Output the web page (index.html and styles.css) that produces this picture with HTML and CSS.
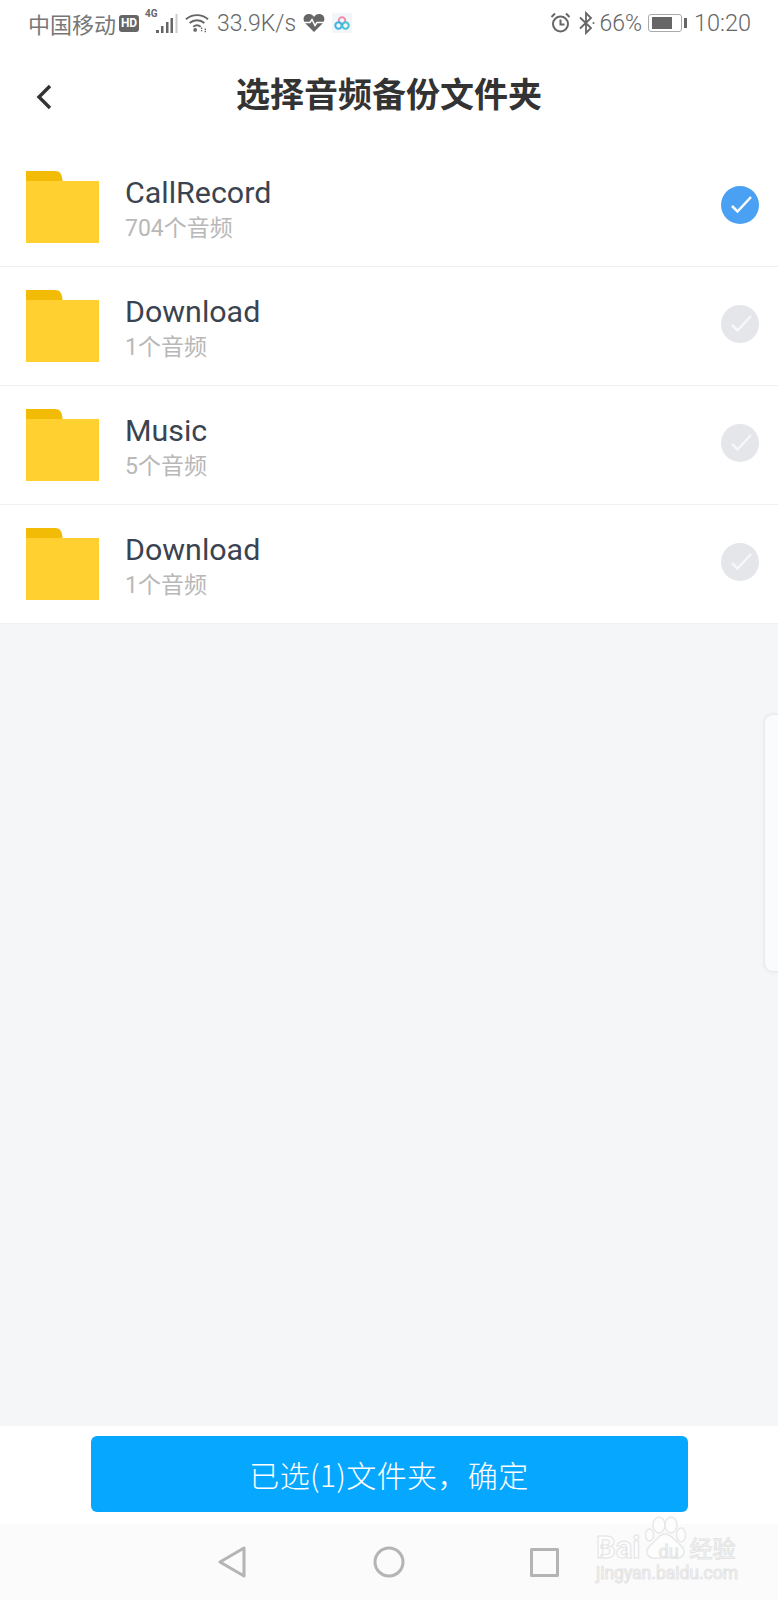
FILE: index.html
```html
<!DOCTYPE html>
<html>
    <head>
        <title>选择音频备份文件夹</title>
        <link rel="stylesheet" href="styles.css">
    </head>
    <body>
        <div class="page">
            <div class="status">
                <div class="status-left">
                    <span class="carrier">中国移动</span>
                    <span class="hd">HD</span>
                    <span class="net"><span class="net-label">4G</span><svg width="24" height="22" viewBox="0 0 24 22"><g fill="#666"><rect x="1" y="17" width="3" height="3"/><rect x="6" y="13" width="2.500" height="7"/><rect x="11" y="9" width="2.500" height="11"/><rect x="15.500" y="5" width="2.500" height="15"/></g><rect x="20.500" y="1" width="2" height="19" fill="#ccc"/></svg></span>
                    <svg width="24" height="22" viewBox="0 0 26 22" fill="none" stroke="#666" stroke-width="2"><path d="M1 7c7-6 17-6 24 0M5 11c4.500-4 11.500-4 16 0M9 15c2.500-2 5.500-2 8 0"/><circle cx="11" cy="18.500" r="2" fill="#666" stroke="none"/><path d="M18 16v5M22 17v4" stroke-width="1.500" stroke-dasharray="1.500 1"/></svg>
                    <span class="speed">33.9K/s</span>
                    <svg width="22" height="20" viewBox="0 0 22 20"><path d="M11 19 2 10C-1 6 1 1 6 1c2 0 4 1 5 3 1-2 3-3 5-3 5 0 7 5 4 9z" fill="#666"/><path d="M1 9.500h6l2-3 3 6 2-3h7" stroke="#fff" stroke-width="1.500" fill="none"/></svg>
                    <svg width="20" height="20" viewBox="0 0 20 20" fill="none" stroke-width="2"><rect width="20" height="20" rx="2" fill="#f2f6f8" stroke="none"/><circle cx="10" cy="7.500" r="3.200" stroke="#ee8fb0"/><circle cx="6.500" cy="12.500" r="3.200" stroke="#3fb4e6"/><circle cx="13.500" cy="12.500" r="3.200" stroke="#45c4d8"/></svg>
                </div>
                <div class="status-right">
                    <svg width="21" height="22" viewBox="0 0 21 22" fill="none" stroke="#666" stroke-width="2"><circle cx="10.500" cy="12" r="7.500"/><path d="M10.500 7.500V12.500H14.500M1.500 5 5 1.500M19.500 5 16 1.500"/></svg>
                    <svg class="ic-bt" width="17" height="24" viewBox="0 0 17 24" fill="none" stroke="#666" stroke-width="1.800"><path d="M2 6.500 13 17l-5 5V2l5 5L2 17.500"/><circle cx="15.500" cy="12" r="1" fill="#666" stroke="none"/></svg>
                    <span class="pct">66%</span>
                    <span class="battery"><span class="battery-fill"></span></span>
                    <span class="battery-tip"></span>
                    <span class="clock">10:20</span>
                </div>
            </div>

            <div class="header">
                <svg class="back" width="16" height="26" viewBox="0 0 16 26" fill="none" stroke="#333" stroke-width="3.400"><path d="M14 2 3 13l11 11"/></svg>
                <h1>选择音频备份文件夹</h1>
            </div>

            <div class="list">
                <div class="row">
                    <svg class="folder" width="73" height="72" viewBox="0 0 73 72"><path d="M0 10V0h29c5 0 7 3 7.500 10z" fill="#f2bb06"/><rect y="10" width="73" height="62" fill="#ffd02f"/></svg>
                    <div class="info">
                        <div class="name">CallRecord</div>
                        <div class="count">704个音频</div>
                    </div>
                    <svg class="check on" width="38" height="38" viewBox="0 0 38 38"><circle cx="19" cy="19" r="19"/><path d="M11 20l5.500 5.500L30 11"/></svg>
                </div>
                <div class="row">
                    <svg class="folder" width="73" height="72" viewBox="0 0 73 72"><path d="M0 10V0h29c5 0 7 3 7.500 10z" fill="#f2bb06"/><rect y="10" width="73" height="62" fill="#ffd02f"/></svg>
                    <div class="info">
                        <div class="name">Download</div>
                        <div class="count">1个音频</div>
                    </div>
                    <svg class="check" width="38" height="38" viewBox="0 0 38 38"><circle cx="19" cy="19" r="19"/><path d="M11 20l5.500 5.500L30 11"/></svg>
                </div>
                <div class="row">
                    <svg class="folder" width="73" height="72" viewBox="0 0 73 72"><path d="M0 10V0h29c5 0 7 3 7.500 10z" fill="#f2bb06"/><rect y="10" width="73" height="62" fill="#ffd02f"/></svg>
                    <div class="info">
                        <div class="name">Music</div>
                        <div class="count">5个音频</div>
                    </div>
                    <svg class="check" width="38" height="38" viewBox="0 0 38 38"><circle cx="19" cy="19" r="19"/><path d="M11 20l5.500 5.500L30 11"/></svg>
                </div>
                <div class="row">
                    <svg class="folder" width="73" height="72" viewBox="0 0 73 72"><path d="M0 10V0h29c5 0 7 3 7.500 10z" fill="#f2bb06"/><rect y="10" width="73" height="62" fill="#ffd02f"/></svg>
                    <div class="info">
                        <div class="name">Download</div>
                        <div class="count">1个音频</div>
                    </div>
                    <svg class="check" width="38" height="38" viewBox="0 0 38 38"><circle cx="19" cy="19" r="19"/><path d="M11 20l5.500 5.500L30 11"/></svg>
                </div>
            </div>

            <div class="empty">
                <div class="side-tab"></div>
            </div>

            <div class="footer">
                <button class="confirm">已选(1)文件夹，确定</button>
            </div>

            <div class="nav">
                <svg width="28" height="32" viewBox="0 0 28 32" fill="none" stroke="#b4b4b4" stroke-width="3" stroke-linejoin="round"><path d="M26 2v28L2 16z"/></svg>
                <svg width="32" height="32" viewBox="0 0 32 32" fill="none" stroke="#b4b4b4" stroke-width="3"><circle cx="16" cy="16" r="14"/></svg>
                <svg class="nav-square" width="29" height="29" viewBox="0 0 29 29" fill="none" stroke="#b4b4b4" stroke-width="3" stroke-linejoin="round"><rect x="1.500" y="1.500" width="26" height="26"/></svg>
            </div>

            <div class="watermark">
                <svg class="paw" width="42" height="44" viewBox="0 0 42 44" fill="#fdfdfd" stroke="#e8e8e8" stroke-width="1.500"><ellipse cx="4.500" cy="19" rx="4" ry="6"/><ellipse cx="14" cy="9" rx="6" ry="8"/><ellipse cx="26" cy="9" rx="6" ry="8"/><ellipse cx="36" cy="19" rx="4.500" ry="7"/><path d="M20 18c-5 0-7 4-11 8-5 4-8 7-7 11 1 5 7 6 12 5 4-1 9-1 13 0 5 1 11 0 12-5 1-4-2-7-7-11-4-4-7-8-12-8z"/></svg>
                <div class="wm-top"><span class="wm-bai">Bai</span><span class="wm-du">du</span><span class="wm-cn">经验</span></div>
                <div class="wm-url">jingyan.baidu.com</div>
            </div>
        </div>
    </body>
</html>
```

FILE: styles.css
```css
* {
    box-sizing: border-box;
}
body {
    margin: 0;
    font-family: Roboto, "Noto Sans CJK SC", sans-serif;
}
.page {
    position: relative;
    display: flex;
    flex-direction: column;
    height: 1600px;
    overflow: hidden;
    background: #fff;
}

/* status bar */
.status {
    display: flex;
    justify-content: space-between;
    align-items: center;
    height: 48px;
    padding: 0 27px 2px 28px;
    font-size: 23px;
    font-weight: 300;
    color: #666;
}
.status-left, .status-right {
    display: flex;
    align-items: center;
    gap: 7px;
}
.status svg {
    display: block;
}
.carrier {
    font-size: 22px;
    font-weight: 400;
    color: #777;
}
.hd {
    width: 20px;
    height: 17px;
    margin-left: -4px;
    border-radius: 3px;
    background: #666;
    color: #fff;
    font-size: 12px;
    font-weight: 700;
    line-height: 17px;
    text-align: center;
}
.net {
    position: relative;
    display: block;
    width: 34px;
    height: 24px;
    padding-left: 10px;
    padding-top: 2px;
    margin-left: -1px;
    margin-right: -1px;
}
.net-label {
    position: absolute;
    top: -3px;
    left: 0;
    font-size: 10px;
    font-weight: 700;
}
.speed {
    margin-left: 1px;
}
.status-right {
    gap: 4px;
}
.ic-bt {
    margin-left: 3px;
}
.pct {
    margin-right: -1px;
}
.battery {
    display: block;
    width: 34px;
    height: 18px;
    margin-left: 3px;
    padding: 2px 3px;
    border: 1px solid #aaa;
    border-radius: 3px;
}
.battery-fill {
    display: block;
    width: 20px;
    height: 12px;
    background: #666;
}
.battery-tip {
    display: block;
    width: 3px;
    height: 10px;
    margin-left: -2px;
    background: #666;
}
.clock {
    margin-left: 3px;
    font-size: 23.500px;
}

/* header */
.header {
    position: relative;
    height: 100px;
}
.header h1 {
    margin: 0;
    padding-top: 21px;
    font-size: 34px;
    font-weight: 700;
    line-height: 52px;
    text-align: center;
    color: #333;
}
.back {
    position: absolute;
    left: 36px;
    top: 36px;
}

/* folders */
.row {
    display: flex;
    align-items: center;
    height: 119px;
    padding: 0 19px 0 26px;
    border-bottom: 1px solid #eeeff1;
}
.folder {
    flex: none;
}
.info {
    flex: 1;
    margin-left: 26px;
    margin-top: 5px;
}
.name {
    font-size: 30.400px;
    line-height: 38px;
    color: #3a4350;
}
.count {
    font-size: 23px;
    line-height: 34px;
    color: #b8b8b8;
}
.check {
    flex: none;
    margin-top: -4px;
}
.check circle {
    fill: #e5e6e9;
}
.check path {
    fill: none;
    stroke: #f6f7f8;
    stroke-width: 2.500;
}
.check.on circle {
    fill: #4aa1f3;
}
.check.on path {
    stroke: #fff;
}

.empty {
    flex: 1;
    position: relative;
    background: #f5f6f8;
}
.side-tab {
    position: absolute;
    right: -8px;
    top: 91px;
    width: 21px;
    height: 256px;
    background: #fafbfc;
    border-radius: 8px;
    box-shadow: 0 0 4px rgba(0, 0, 0, 0.12);
}

.footer {
    display: flex;
    justify-content: center;
    height: 98px;
    padding-top: 10px;
    background: #fff;
}
.confirm {
    width: 597px;
    height: 76px;
    border: 0;
    border-radius: 6px;
    background: #06a7ff;
    color: #fff;
    font-family: "Noto Sans CJK SC", sans-serif;
    font-size: 30px;
    font-weight: 300;
    letter-spacing: 0.400px;
}

.nav {
    display: flex;
    align-items: center;
    gap: 127px;
    height: 76px;
    padding-left: 218px;
    background: #fbfbfb;
}
.nav-square {
    margin-left: -2px;
}

/* baidu watermark, over the bottom bar */
.watermark {
    position: absolute;
    left: 596px;
    top: 1516px;
    width: 142px;
    height: 68px;
    color: #fdfdfd;
    -webkit-text-stroke: 1px #e4e4e4;
}
.paw {
    position: absolute;
    left: 49px;
    top: 0;
}
.wm-top {
    position: absolute;
    left: 0;
    top: 13px;
    display: flex;
    align-items: center;
    height: 36px;
    font-size: 31px;
    font-weight: 700;
    white-space: nowrap;
}
.wm-du {
    position: relative;
    width: 40px;
    margin-left: 8px;
    padding-top: 8px;
    font-size: 18px;
    font-weight: 400;
    text-align: center;
}
.wm-cn {
    margin-left: 1px;
    font-size: 23px;
    font-weight: 400;
}
.wm-url {
    position: absolute;
    left: 0;
    top: 46px;
    font-size: 17.500px;
    line-height: 22px;
    white-space: nowrap;
}
```
